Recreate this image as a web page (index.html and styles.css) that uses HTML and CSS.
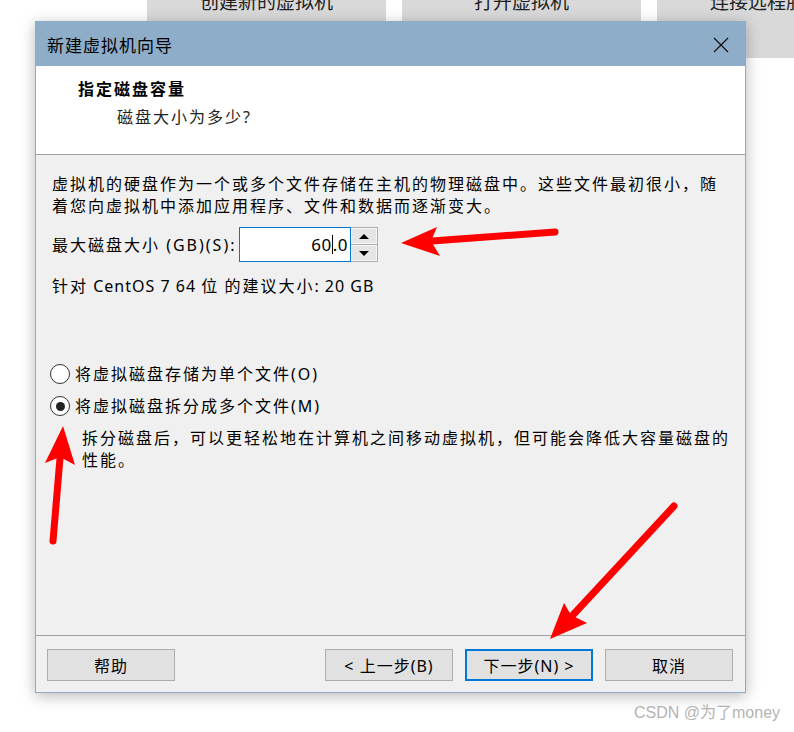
FILE: index.html
```
<!DOCTYPE html>
<html lang="zh-CN">

<head>
    <meta charset="utf-8">
    <title>新建虚拟机向导</title>
    <link rel="stylesheet" href="styles.css">
</head>

<body>
    <!-- kacheln i baggrunden (workstation startside) -->
    <div class="launcher">
        <div class="tile">创建新的虚拟机</div>
        <div class="tile">打开虚拟机</div>
        <div class="tile">连接远程服务器</div>
    </div>

    <div class="dialog">
        <div class="titlebar">
            <span>新建虚拟机向导</span>
            <svg class="close" width="16" height="16" viewBox="0 0 16 16">
                <path d="M1 1 L15 15 M15 1 L1 15" stroke="#111" stroke-width="1.2" fill="none" />
            </svg>
        </div>

        <div class="head">
            <h1>指定磁盘容量</h1>
            <p>磁盘大小为多少?</p>
        </div>

        <div class="content">
            <p class="intro">虚拟机的硬盘作为一个或多个文件存储在主机的物理磁盘中。这些文件最初很小，随<br>着您向虚拟机中添加应用程序、文件和数据而逐渐变大。</p>

            <div class="size-row">
                <span class="size-label">最大磁盘大小 (GB)(S):</span>
                <div class="spin">
                    <div class="field">60<span class="caret"></span>.0</div>
                    <div class="steps">
                        <div class="step"><span class="tri up"></span></div>
                        <div class="step"><span class="tri down"></span></div>
                    </div>
                </div>
            </div>

            <p class="hint">针对<span class="lat"> CentOS 7 64 </span>位<span class="lat"> </span>的建议大小<span class="lat">: 20 GB</span></p>

            <div class="options">
                <div class="radio"><span class="dot"></span>将虚拟磁盘存储为单个文件(O)</div>
                <div class="radio checked"><span class="dot"></span>将虚拟磁盘拆分成多个文件(M)</div>
                <p class="note">拆分磁盘后，可以更轻松地在计算机之间移动虚拟机，但可能会降低大容量磁盘的<br>性能。</p>
            </div>
        </div>

        <div class="footer">
            <button class="btn">帮助</button>
            <div class="nav-btns">
                <button class="btn">&lt; 上一步(B)</button>
                <button class="btn primary">下一步(N) &gt;</button>
                <button class="btn">取消</button>
            </div>
        </div>
    </div>

    <!-- røde pile tegnet ovenpå -->
    <svg class="marks" width="794" height="732" viewBox="0 0 794 732">
        <g stroke="#ff0000" stroke-width="7" stroke-linecap="round" fill="none">
            <path d="M555 232 L432 241" />
            <path d="M60 458 L53 541" />
            <path d="M674 506 L572 616" />
        </g>
        <g fill="#ff0000">
            <polygon points="401,243 437,227 431,241 440,256" />
            <polygon points="63,426 75,465 60,457 45,463" />
            <polygon points="550,639 564,603 571,615 587,623" />
        </g>
    </svg>

    <div class="watermark">CSDN @为了money</div>
</body>

</html>
```

FILE: styles.css
```
body {
    margin: 0;
    background-color: #ffffff;
    font-family: "Noto Sans", "Noto Sans CJK SC", sans-serif;
    color: #000;
    width: 794px;
    height: 732px;
    overflow: hidden;
    position: relative;
}

.launcher {
    display: flex;
    gap: 16px;
    padding-left: 147px;
    margin-top: -12px;
}

.tile {
    flex: 0 0 239px;
    height: 70px;
    background-color: #d9d9d9;
    font-size: 19px;
    line-height: 28px;
    text-align: center;
    color: #222;
    white-space: nowrap;
    overflow: hidden;
}

.dialog {
    position: absolute;
    left: 35px;
    top: 21px;
    width: 709px;
    height: 670px;
    border: 1px solid #8fabc6;
    background-color: #f0f0f0;
    box-shadow: 0 3px 14px rgba(0, 0, 0, 0.28);
    display: flex;
    flex-direction: column;
    font-size: 16px;
    letter-spacing: 2px;
}

.titlebar {
    height: 44px;
    background-color: #8eadc8;
    display: flex;
    align-items: center;
    justify-content: space-between;
    padding: 0 16px 0 11px;
    font-family: "Noto Sans CJK SC", sans-serif;
    font-size: 17px;
    letter-spacing: 1px;
    color: #000;
}

.close {
    margin-top: 1px;
}

.head {
    height: 89px;
    background-color: #ffffff;
    border-bottom: 1px solid #a0a0a0;
    padding: 11px 0 0 42px;
    box-sizing: border-box;
}

.head h1 {
    margin: 0;
    font-size: 16px;
    line-height: 22px;
    font-weight: bold;
    font-family: "Noto Sans CJK SC", sans-serif;
}

.head p {
    margin: 7px 0 0 39px;
    line-height: 22px;
    color: #222;
}

.content {
    flex: 1;
    padding: 18px 0 0 16px;
    line-height: 22px;
}

.content p {
    margin: 0;
    white-space: nowrap;
}

.size-row {
    display: flex;
    align-items: center;
    margin-top: 10px;
}

.size-label {
    width: 187px;
}

.spin {
    display: flex;
    height: 35px;
}

.field {
    border: 1px solid #0078d7;
    background-color: #ffffff;
    text-align: right;
    padding-right: 2px;
    box-sizing: border-box;
    width: 112px;
    line-height: 33px;
    font-size: 17px;
    letter-spacing: 0.5px;
}

.caret {
    display: inline-block;
    width: 1px;
    height: 19px;
    background-color: #000;
    vertical-align: -3px;
}

.steps {
    width: 27px;
    border: 1px solid #adadad;
    border-left: none;
    box-sizing: border-box;
    display: flex;
    flex-direction: column;
    gap: 1px;
    background-color: #adadad;
}

.step {
    flex: 1;
    background-color: #e5e5e5;
    border: 1px solid #f6f6f6;
    display: flex;
    align-items: center;
    justify-content: center;
}

.tri {
    width: 0;
    height: 0;
    border-left: 5px solid transparent;
    border-right: 5px solid transparent;
}

.tri.up {
    border-bottom: 5px solid #000;
}

.tri.down {
    border-top: 5px solid #000;
}

.hint {
    margin-top: 13px !important;
}

.lat {
    letter-spacing: 1px;
}

.options {
    margin-top: 65px;
    display: flex;
    flex-direction: column;
    gap: 8px;
}

.radio {
    display: flex;
    align-items: center;
    height: 24px;
    gap: 5px;
    margin-left: -2px;
}

.dot {
    width: 18px;
    height: 18px;
    border: 1px solid #333;
    border-radius: 50%;
    background-color: #ffffff;
    display: flex;
    align-items: center;
    justify-content: center;
}

.checked .dot::after {
    content: "";
    width: 9px;
    height: 9px;
    border-radius: 50%;
    background-color: #222;
}

.note {
    margin-top: 1px !important;
    padding-left: 30px;
}

.footer {
    height: 57px;
    border-top: 1px solid #a0a0a0;
    display: flex;
    justify-content: space-between;
    padding: 13px 12px 0 11px;
    box-sizing: border-box;
}

.nav-btns {
    display: flex;
    gap: 12px;
}

.btn {
    width: 128px;
    height: 32px;
    border: 1px solid #adadad;
    background-color: #e1e1e1;
    font-family: "Noto Sans", "Noto Sans CJK SC", sans-serif;
    font-size: 16px;
    letter-spacing: 1px;
    color: #000;
    padding: 0;
}

.btn.primary {
    border: 2px solid #0078d7;
}

.marks {
    position: absolute;
    left: 0;
    top: 0;
    pointer-events: none;
}

.watermark {
    position: absolute;
    left: 634px;
    top: 702px;
    font-family: "Liberation Sans", "Noto Sans CJK SC", sans-serif;
    font-size: 16px;
    line-height: 22px;
    color: #b3b3b3;
}
```
